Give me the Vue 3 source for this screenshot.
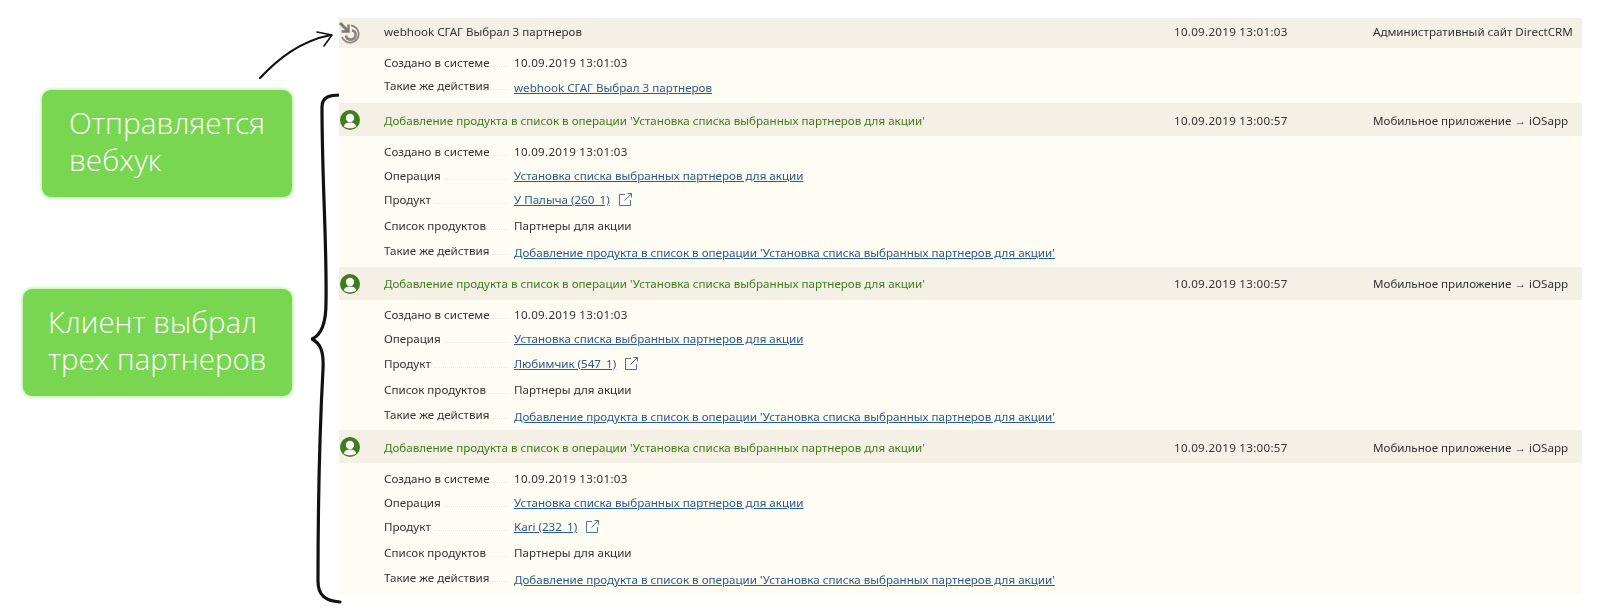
<template>
  <div class="page">
    <aside class="notes">
      <div class="note note-hook">Отправляется<br />вебхук</div>
      <div class="note note-client">Клиент выбрал<br />трех партнеров</div>

      <!-- стрелка к первому действию -->
      <svg class="arrow" width="90" height="70" viewBox="0 0 90 70" fill="none">
        <path d="M2 59 C20 40 42 22 73 16" stroke="#111" stroke-width="2.2" stroke-linecap="round" />
        <path d="M59 13 L74 16 L66 27" stroke="#111" stroke-width="1.6" stroke-linecap="round" stroke-linejoin="round" />
      </svg>

      <!-- фигурная скобка -->
      <svg class="brace" width="32" height="512" viewBox="0 0 32 512" fill="none">
        <path
          d="M30 2 C18 2 11 4 11 14 C11 90 16 150 15 210 C15 234 8 243 1 246 C9 250 13 258 12 276 C8 350 7 430 7 488 C7 502 14 508 29 509"
          stroke="#111"
          stroke-width="3.2"
          stroke-linecap="round"
        />
      </svg>
    </aside>

    <main class="log">
      <section v-for="(item, i) in items" :key="i" class="entry">
        <header class="head" :class="{ 'head-short': item.hook }">
          <svg v-if="item.hook" class="icon" width="26" height="26" viewBox="0 0 26 26" fill="none">
            <path d="M14 5.5 A8.6 8.6 0 1 1 5 17" stroke="#8a8781" stroke-width="1.8" />
            <path d="M15 10.2 A4.8 4.8 0 1 1 9 15.5" stroke="#8a8781" stroke-width="2.6" />
            <path d="M3 3 L11 11" stroke="#7d7a74" stroke-width="3" />
            <path d="M11.5 4.5 V11.5 H4.5" stroke="#7d7a74" stroke-width="2.4" />
          </svg>
          <svg v-else class="icon" width="26" height="26" viewBox="0 0 26 26">
            <circle cx="13" cy="13" r="10" fill="#3f7d1c" />
            <circle cx="13" cy="11" r="4.2" fill="#fff" />
            <path d="M6.8 19.4 C7.5 16.6 10 15.6 13 15.6 C16 15.6 18.5 16.6 19.2 19.4 C17.6 20.6 15.4 21.2 13 21.2 C10.6 21.2 8.4 20.6 6.8 19.4 Z" fill="#fff" />
          </svg>
          <span class="title" :class="{ 'title-green': !item.hook }">{{ item.title }}</span>
          <span class="date">{{ item.date }}</span>
          <span class="source">{{ item.source }}</span>
        </header>

        <div class="body" :class="{ 'body-short': item.hook }">
          <div class="row">
            <span class="label">Создано в системе</span>
            <span class="value date-value">10.09.2019 13:01:03</span>
          </div>
          <template v-if="item.product">
            <div class="row">
              <span class="label">Операция</span>
              <a class="value link">Установка списка выбранных партнеров для акции</a>
            </div>
            <div class="row row-product">
              <span class="label">Продукт</span>
              <a class="value link">{{ item.product }}</a>
              <svg class="ext" width="15" height="15" viewBox="0 0 15 15" fill="none">
                <path d="M7 2.5 H1.5 V13.5 H12.5 V8" stroke="#4b739b" stroke-width="1" />
                <path d="M6.5 8.5 L13.5 1.5 M9.5 1.5 H13.5 V5.5" stroke="#4b739b" stroke-width="1" />
              </svg>
            </div>
            <div class="row row-list">
              <span class="label">Список продуктов</span>
              <span class="value">Партнеры для акции</span>
            </div>
          </template>
          <div class="row row-same">
            <span class="label">Такие же действия</span>
            <a class="value link">{{ item.title }}</a>
          </div>
        </div>
      </section>
    </main>
  </div>
</template>

<script setup>
const addTitle = "Добавление продукта в список в операции 'Установка списка выбранных партнеров для акции'"
const mobile = 'Мобильное приложение → iOSapp'

const items = [
  {
    hook: true,
    title: 'webhook СГАГ Выбрал 3 партнеров',
    date: '10.09.2019 13:01:03',
    source: 'Административный сайт DirectCRM'
  },
  { title: addTitle, date: '10.09.2019 13:00:57', source: mobile, product: 'У Палыча (260_1)' },
  { title: addTitle, date: '10.09.2019 13:00:57', source: mobile, product: 'Любимчик (547_1)' },
  { title: addTitle, date: '10.09.2019 13:00:57', source: mobile, product: 'Kari (232_1)' }
]
</script>

<style>
body {
  background: #fff;
}
</style>

<style scoped>
.page {
  display: flex;
  width: 1599px;
  height: 612px;
  overflow: hidden;
  background: #fff;
  font-family: "Noto Sans", "Liberation Sans", sans-serif;
}

.notes {
  position: relative;
  flex: 0 0 339px;
  display: flex;
  flex-direction: column;
  align-items: flex-end;
  padding: 90px 47px 0 0;
  box-sizing: border-box;
}

.note {
  box-sizing: border-box;
  height: 107px;
  border-radius: 9px;
  background: #79d651;
  box-shadow: 0 0 4px #8fe06a;
  color: #fff;
  font-family: "Open Sans", sans-serif;
  font-weight: 300;
  font-size: 29.8px;
  line-height: 37px;
}

.note-hook {
  width: 250px;
  padding: 14px 0 0 27px;
}

.note-client {
  width: 269px;
  margin-top: 92px;
  padding: 14.5px 0 0 25px;
  font-size: 29.4px;
}

.arrow {
  position: absolute;
  left: 258px;
  top: 19px;
}

.brace {
  position: absolute;
  left: 311px;
  top: 93px;
}

.log {
  flex: 0 0 1243px;
  padding-top: 18px;
  color: #333;
  font-size: 11.6px;
  filter: blur(0.3px);
}

.head {
  display: flex;
  align-items: center;
  box-sizing: border-box;
  height: 33px;
  padding-top: 1px;
  background: #f5f0e6;
}

.head-short {
  height: 30px;
  padding-top: 0;
  padding-bottom: 3px;
}

.head-short .icon {
  margin-bottom: -3px;
}

.icon {
  flex: none;
  margin-left: -2px;
  margin-right: 21px;
}

.title {
  flex: 0 0 790px;
}

.title-green {
  color: #3f7d1c;
}

.date {
  flex: 0 0 199px;
  letter-spacing: 0.28px;
}

.date-value {
  letter-spacing: 0.28px;
}

.body {
  height: 130.5px;
  box-sizing: border-box;
  padding-top: 3px;
  padding-left: 45px;
  background: #fefcf3;
}

.body-short {
  height: 55px;
  padding-top: 2px;
}

.row {
  display: flex;
  align-items: center;
  height: 24px;
}

.row-product {
  height: 25px;
}

.row-list {
  height: 27px;
}

.row-same {
  height: 23px;
}

.label {
  flex: 0 0 130px;
  display: flex;
  align-items: baseline;
}

/* еле заметный пунктир после подписи */
.label::after {
  content: "";
  flex: 1;
  margin: 0 6px 0 3px;
  border-bottom: 1px dotted #ece8dc;
}

.link {
  color: #2a5a8f;
  text-decoration: underline;
}

.row-same .link {
  margin-top: 4px;
}

.ext {
  margin-left: 8px;
}
</style>
